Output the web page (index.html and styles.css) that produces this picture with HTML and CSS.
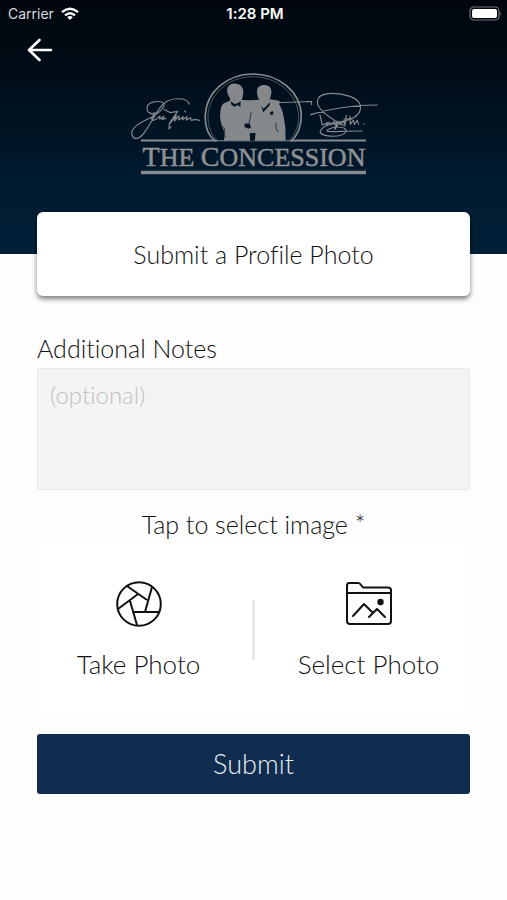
FILE: index.html
```
<!DOCTYPE html>
<html lang="en">
<head>
  <meta charset="utf-8">
  <meta name="viewport" content="width=device-width, initial-scale=1">
  <title>Submit a Profile Photo</title>
  <link rel="stylesheet" href="styles.css">
</head>
<body>
  <header class="header">
    <div class="status-bar">
      <div class="carrier">
        <span>Carrier</span>
        <svg width="18" height="14" viewBox="0 0 18 14">
          <g fill="none" stroke="#fff" stroke-width="2.4">
            <path d="M1 5.2Q9-1.6 17 5.2"/>
            <path d="M4 8.4Q9 4 14 8.4"/>
          </g>
          <path d="M6.2 10.2Q9 8 11.8 10.2L9 13z" fill="#fff"/>
        </svg>
      </div>
      <div class="time">1:28 PM</div>
      <div class="battery">
        <svg width="33" height="16" viewBox="0 0 33 16">
          <rect x="1" y="1" width="29" height="13" rx="4" fill="none" stroke="#70767b" stroke-width="1.2"/>
          <rect x="3" y="3" width="25" height="9" rx="2" fill="#fff"/>
          <path d="M31.400 5.500q1.600 2 0 4z" fill="#70767b"/>
        </svg>
      </div>
    </div>
    <button class="back-btn" type="button" aria-label="Back">
      <svg width="26" height="24" viewBox="0 0 26 24" fill="none" stroke="#fff" stroke-width="2.600" stroke-linecap="round" stroke-linejoin="round">
        <path d="M12.500 2L2 12L12.500 22M2.500 12H24"/>
      </svg>
    </button>
    <svg class="logo" width="252" height="110" viewBox="128 68 252 110" role="img" aria-label="The Concession">
      <!-- arch and rules -->
      <g fill="none" stroke="#858a8e">
        <path d="M141 140.500H217M291 140.500H366" stroke-width="2"/>
        <path d="M214 140.800H294" stroke-width="1"/>
        <path d="M141 172.500H366" stroke-width="3.500"/>
      </g>
      <!-- two golfers -->
      <g transform="translate(200 70) scale(.3333)">
        <path d="M46 214C24 196 14 166 16 134C20 66 80 13 157 12C240 12 300 66 304 134C304 168 294 196 272 214" fill="none" stroke="#858a8e" stroke-width="5"/>
        <path d="M53 213C33 196 23 166 24 136C29 72 84 21 157 20C234 20 291 72 296 136C297 168 286 196 264 213" fill="none" stroke="#5a636b" stroke-width="2.500"/>
        <path d="M88 94L91 86C84 78 80 66 82 56C86 43 98 40 108 41C121 42 130 52 130 65C130 77 127 85 125 90L150 91L178 89C171 80 169 65 173 54C178 46 187 44 195 45C208 46 216 56 214 69C213 78 211 83 209 88L230 91L239 93L238 103L242 112C250 125 252 147 256 171L257 212H164V192L150 190V212H72L74 187L67 170C59 150 58 132 64 110C69 99 77 97 88 94z" fill="#85888b"/>
        <path d="M92 94L104 102L114 99L122 94L121 112L114 105L103 110L94 104zM183 107L191 116L210 97L209 106L190 127z" fill="#061522"/>
        <path d="M134 161L149 160L153 173L145 176L133 170zM210 126L219 124L220 133L212 136zM149 190L167 189L164 212H151z" fill="#061522"/>
        <path d="M153 127L151 142L147 158M228 158L229 178L235 186M68 169L74 176L72 187M74 191L75 202" fill="none" stroke="#26323d" stroke-width="3"/>
        <path d="M232 98L322 95" fill="none" stroke="#858a8e" stroke-width="3"/>
      </g>
      <path d="M306 101.700H311.500V105" fill="none" stroke="#858a8e" stroke-width="1.200"/>
      <!-- signatures -->
      <g transform="translate(120 60) scale(.3333)" fill="none" stroke="#858a8e" stroke-width="3.500" stroke-linecap="round" stroke-linejoin="round">
        <path d="M208 132C200 110 150 112 130 132C110 150 100 180 75 215C60 238 42 242 36 225C29 205 65 185 95 172C125 155 142 132 125 126C110 122 84 126 81 142C79 162 98 163 105 158C92 175 91 187 108 178L120 168L119 177L132 169L126 178L138 175"/>
        <path d="M132 148L151 158L173 154L148 190L147 207L153 200M150 190L169 166L163 183L177 168L176 180L190 170L187 179L201 170L199 180L212 173L214 181L225 178L239 181M194 153L197 156"/>
      </g>
      <g transform="translate(250 60) scale(.3333)" fill="none" stroke="#858a8e" stroke-width="3.500" stroke-linecap="round" stroke-linejoin="round">
        <path d="M182 164C240 146 310 135 382 135M285 198C248 180 203 151 202 126C201 95 260 96 300 109C345 125 340 164 299 178C260 192 220 190 211 214C205 230 272 236 288 216C294 202 260 195 236 208C214 220 260 213 336 213"/>
        <path d="M210 165L217 195L234 188L228 197L239 187L243 195L252 183L254 195L263 184L254 208L270 184L271 194L282 184L285 195L289 166M282 177H304M300 168L301 193L310 180L313 193L322 181L326 193M318 170V171M341 191V192"/>
      </g>
      <text class="logo-text" x="254" y="166" text-anchor="middle"><tspan class="logo-cap">T</tspan>HE <tspan class="logo-cap">C</tspan>ONCESSION</text>
    </svg>
  </header>

  <main class="content">
    <h1 class="title-card">Submit a Profile Photo</h1>

    <form class="photo-form">
      <label for="notes">Additional Notes</label>
      <textarea id="notes" placeholder="(optional)"></textarea>

      <p class="hint">Tap to select image *</p>
      <div class="picker">
        <button class="picker-btn" type="button">
          <svg width="48" height="48" viewBox="0 0 48 48" fill="none" stroke="#111" stroke-width="2">
            <circle cx="24" cy="24" r="21.800"/>
            <path d="M12 6L32 20M37 7L30 32M45 32H18M22 45L15 21M3 29L23 14"/>
          </svg>
          <span>Take Photo</span>
        </button>
        <button class="picker-btn" type="button">
          <svg width="48" height="48" viewBox="0 0 48 48" fill="none" stroke="#111" stroke-width="2" stroke-linejoin="round" stroke-linecap="round">
            <path d="M4 3H13Q15 3 16 5L18 7.500H43Q46 7.500 46 10V41Q46 44 43 44H5Q2 44 2 41V6Q2 3 4 3zM2 13H46"/>
            <path d="M8 36L19 24L28 33M24 37L32 29L40 37"/>
            <circle cx="35.500" cy="22" r="2.200" fill="#111"/>
          </svg>
          <span>Select Photo</span>
        </button>
      </div>

      <button class="submit-btn" type="submit">Submit</button>
    </form>
  </main>
</body>
</html>
```
FILE: styles.css
```
* {
  box-sizing: border-box;
}

body {
  margin: 0;
  min-height: 100vh;
  background: #fdfdfd;
  color: #111;
  font-family: Lato, 'Open Sans', sans-serif;
  font-size: 25px;
  font-weight: 300;
  font-variant-ligatures: none;
  line-height: 32px;
}

button {
  border: none;
  font: inherit;
  cursor: pointer;
}

.header {
  display: flex;
  flex-direction: column;
  height: 254px;
  background: linear-gradient(#00060c, #000d18 30%, #001b31 75%, #002038);
}

.status-bar {
  display: grid;
  grid-template-columns: 1fr auto 1fr;
  align-items: center;
  height: 28px;
  padding: 0 5px 0 8px;
  color: #fff;
  font-family: Inter, sans-serif;
  font-size: 14px;
  font-weight: 400;
  line-height: 20px;
}

.carrier {
  display: flex;
  align-items: center;
  gap: 7px;
  color: #d8dbde;
}

.time {
  font-size: 15px;
  font-weight: 600;
}

.battery {
  display: flex;
  justify-content: flex-end;
}

.back-btn {
  display: flex;
  align-self: flex-start;
  margin-left: 19px;
  padding: 10px 8px;
  background: none;
}

.logo {
  align-self: center;
  margin-top: -4px;
}

.logo-text {
  fill: #8f9294;
  stroke: #8f9294;
  stroke-width: 0.5px;
  font-family: 'Liberation Serif', serif;
  font-size: 26px;
  font-weight: 400;
}

.logo-cap {
  font-size: 28px;
}

.content {
  padding: 0 37px 40px;
}

.title-card {
  margin: -42px 0 36px;
  padding: 26px 16px;
  background: #fff;
  border-radius: 6px;
  box-shadow: 0 3px 5px rgba(0, 0, 0, 0.5);
  font-size: 25px;
  font-weight: 300;
  text-align: center;
}

.photo-form {
  display: flex;
  flex-direction: column;
}

.photo-form label {
  margin-bottom: 4px;
}

textarea {
  width: 100%;
  height: 122px;
  padding: 10px 12px;
  border: 1px solid #e9ebeb;
  border-radius: 0;
  background: #f5f4f2;
  color: #111;
  font: inherit;
  font-size: 24px;
  resize: none;
}

textarea::placeholder {
  color: #c0c1c3;
}

.hint {
  margin: 18px 0 4px;
  text-align: center;
}

.picker {
  display: flex;
  padding: 36px 0;
  background: #fff;
}

.picker-btn {
  display: flex;
  flex: 1;
  flex-direction: column;
  align-items: center;
  gap: 20px;
  padding: 0;
  background: none;
  color: #111;
  font-size: 26px;
}

/* short rule between the two choices */
.picker::before {
  order: 1;
  align-self: center;
  width: 3px;
  height: 60px;
  margin: 0 12px;
  background: #e8e8e8;
  content: '';
}

.picker-btn:last-child {
  order: 2;
}

.submit-btn {
  margin-top: 18px;
  padding: 14px;
  background: #102c4e;
  border-radius: 3px;
  color: #e8eef5;
  font-size: 27px;
}
```
